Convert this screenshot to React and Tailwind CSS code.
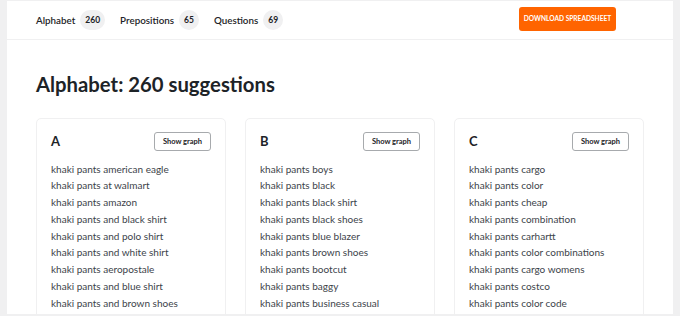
const tabs = [
  { label: 'Alphabet', count: 260 },
  { label: 'Prepositions', count: 65 },
  { label: 'Questions', count: 69 },
]

const groups = [
  {
    letter: 'A',
    items: [
      'khaki pants american eagle',
      'khaki pants at walmart',
      'khaki pants amazon',
      'khaki pants and black shirt',
      'khaki pants and polo shirt',
      'khaki pants and white shirt',
      'khaki pants aeropostale',
      'khaki pants and blue shirt',
      'khaki pants and brown shoes',
    ],
  },
  {
    letter: 'B',
    items: [
      'khaki pants boys',
      'khaki pants black',
      'khaki pants black shirt',
      'khaki pants black shoes',
      'khaki pants blue blazer',
      'khaki pants brown shoes',
      'khaki pants bootcut',
      'khaki pants baggy',
      'khaki pants business casual',
    ],
  },
  {
    letter: 'C',
    items: [
      'khaki pants cargo',
      'khaki pants color',
      'khaki pants cheap',
      'khaki pants combination',
      'khaki pants carhartt',
      'khaki pants color combinations',
      'khaki pants cargo womens',
      'khaki pants costco',
      'khaki pants color code',
    ],
  },
]

export default function App() {
  return (
    <div
      className="w-[680px] h-[316px] bg-[#f0f0f1] pt-px px-[7px] pb-[2px] overflow-hidden"
      style={{ fontFamily: 'Lato, "Open Sans", sans-serif' }}
    >
      <div className="bg-white h-full overflow-hidden">
        {/* Tabs bar */}
        <header className="h-[39px] border-b border-[#f0f0f1] flex items-center justify-between pl-[29px] pr-[57px]">
          <nav className="flex items-center gap-[15px]">
            {tabs.map((t) => (
              <div key={t.label} className="flex items-center gap-[5px] text-[9.8px] font-semibold text-[#1d2327]">
                {t.label}
                <span className="bg-[#f0f0f1] rounded-full px-[5px] h-[20px] flex items-center text-[8.5px] font-bold">
                  {t.count}
                </span>
              </div>
            ))}
          </nav>
          <button className="bg-[#ff6400] text-white rounded-[3px] h-[24px] w-[97px] text-[6.6px] font-bold uppercase mt-[-2px] whitespace-nowrap">
            Download Spreadsheet
          </button>
        </header>

        {/* Results */}
        <div className="px-[29px]">
          <h1 className="text-[20.3px] font-bold text-[#1d2327] mt-[30px] leading-[28px]">
            Alphabet: 260 suggestions
          </h1>
          <div className="grid grid-cols-3 gap-[19px] mt-[20px]">
            {groups.map((g) => (
              <div key={g.letter} className="border border-[#f0f0f1] rounded-[5px] pt-[13px] px-[14px] h-[220px]">
                <div className="flex items-center justify-between">
                  <h2 className="text-[13px] font-bold text-[#1d2327]">{g.letter}</h2>
                  <button className="border border-[#a7aaad] rounded-[3px] h-[19px] w-[57px] text-[7.5px] font-bold text-[#1d2327] whitespace-nowrap">
                    Show graph
                  </button>
                </div>
                <ul className="mt-[9px] text-[10px] text-[#3c434a] leading-[16.75px] whitespace-nowrap">
                  {g.items.map((item) => (
                    <li key={item}>{item}</li>
                  ))}
                </ul>
              </div>
            ))}
          </div>
        </div>
      </div>
    </div>
  )
}
